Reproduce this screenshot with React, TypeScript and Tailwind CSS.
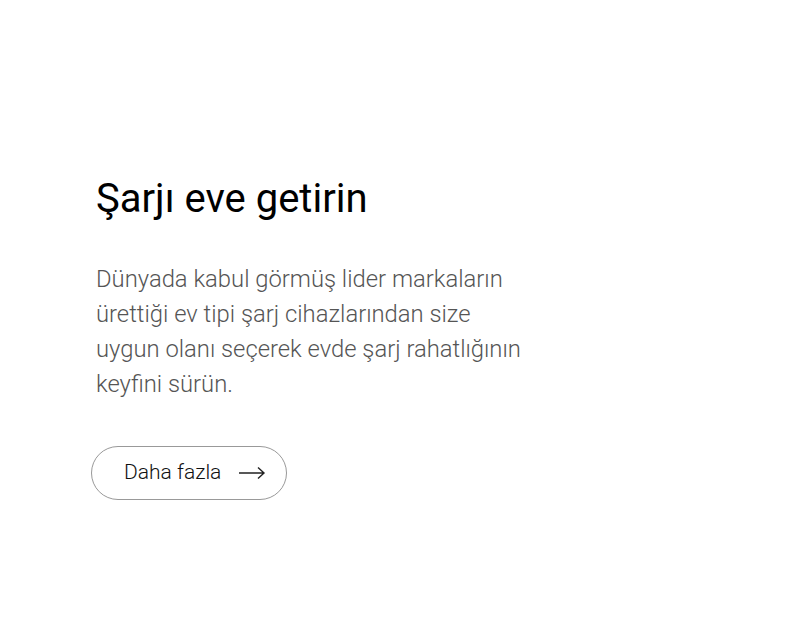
export default function App() {
  return (
    <div className="w-[792px] h-[626px] bg-white pl-[96px] pt-[175px]" style={{ fontFamily: "Roboto, sans-serif" }}>
      <h1 className="text-[40px] leading-[48px] font-normal text-black">Şarjı eve getirin</h1>
      <p className="mt-[39px] w-[440px] text-[23.8px] leading-[35px] font-light text-[#555]">
        Dünyada kabul görmüş lider markaların ürettiği ev tipi şarj cihazlarından size uygun olanı seçerek evde şarj rahatlığının keyfini sürün.
      </p>
      <button className="mt-[44px] -ml-[5px] w-[196px] h-[54px] rounded-full border border-[#999] flex items-center pl-[32px] gap-[17px] text-[21px] text-[#111] font-light">
        <span>Daha fazla</span>
        <svg width="28" height="14" viewBox="0 0 28 14" fill="none" stroke="#222" strokeWidth="1.4">
          <path d="M1 7h25M20 1.5l6 5.5-6 5.5" />
        </svg>
      </button>
    </div>
  );
}
